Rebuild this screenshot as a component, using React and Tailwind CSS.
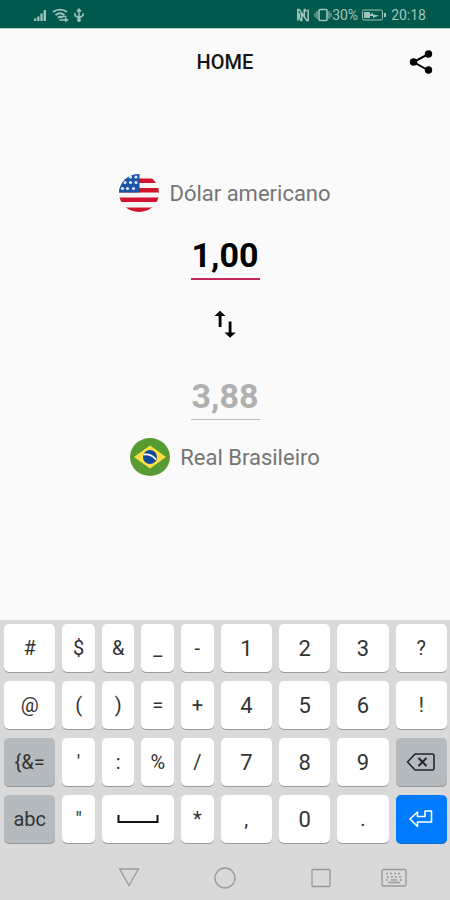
const KEYS = [
  "#", "$", "&", "_", "-", "1", "2", "3", "?",
  "@", "(", ")", "=", "+", "4", "5", "6", "!",
  "{&=", "'", ":", "%", "/", "7", "8", "9", "backspace",
  "abc", '"', "space", "*", ",", "0", ".", "enter",
];

function StatusBar() {
  return (
    <div className="flex h-7 items-center justify-between bg-[#00594c] pt-0.5 pr-6 pl-8 text-[#a0c4bd]">
      <div className="flex items-center gap-1">
        <svg width="16" height="14" viewBox="0 0 16 14" fill="currentColor" aria-hidden="true">
          <path d="M2 10.500h2.300V13H2zM5.200 8.500h2.300V13H5.200zM8.400 5.500h2.300V13H8.400zM11.600 2h2.400v11h-2.400z" />
        </svg>
        <svg width="18" height="14" viewBox="0 0 18 14" fill="none" stroke="currentColor" strokeWidth="1.800" aria-hidden="true">
          <path d="M1 4c4-3.300 10-3.300 14 0M3.500 7c3-2.400 6-2.400 9 0M6 9.700c1.500-1.200 3-1.200 4.500 0" />
          <path d="M7.500 12H15M9.500 8.500h5M13 10l2.500 2-2.500 1.500" strokeWidth="1.400" />
        </svg>
        <svg width="10" height="14" viewBox="0 0 10 14" fill="none" stroke="currentColor" strokeWidth="1.500" aria-hidden="true">
          <path d="M5 2v10M1 5v2.500L5 10l4-2.500V5M3 3.500 5 1.200l2 2.300" />
          <circle cx="5" cy="12" r="1.200" fill="currentColor" />
        </svg>
      </div>
      <div className="flex items-center text-sm">
        <svg width="14" height="14" viewBox="0 0 14 14" fill="none" stroke="currentColor" strokeWidth="1.600" aria-hidden="true">
          <path d="M1.800 12.500v-11h1.400l2.500 3.500v7.500H5L3.500 10.500M12.200 1.500v11h-1.400L8.300 9V1.500H9l1.500 2M3.500 5v6M5.700 5l2.600 4" />
        </svg>
        <svg className="ml-1" width="18" height="14" viewBox="0 0 18 14" fill="none" stroke="currentColor" strokeWidth="1.600" aria-hidden="true">
          <rect x="5" y="1.500" width="8" height="11" rx="1" />
          <path d="M3 3v8M1 5v4M15 3v8M17 5v4" strokeWidth="1" />
        </svg>
        <span>30%</span>
        <svg className="mx-1" width="25" height="12" viewBox="0 0 25 12" fill="none" stroke="currentColor" aria-hidden="true">
          <rect x=".5" y="1" width="20" height="10" rx="1.500" />
          <path d="M2 3h6v6H2z" fill="currentColor" stroke="none" />
          <path d="M23 4v4" strokeWidth="2" />
          <path d="m6 7 5-3.500v2l6 1-6 2.500V7z" fill="currentColor" stroke="none" />
        </svg>
        <span>20:18</span>
      </div>
    </div>
  );
}

function UsaFlag() {
  return (
    <svg width="40" height="38" viewBox="0 0 40 38" aria-hidden="true">
      <clipPath id="usa"><ellipse cx="20" cy="19" rx="20" ry="19" /></clipPath>
      <g clipPath="url(#usa)">
        <path d="M0 0h40v38H0z" fill="#f5f5f5" />
        <path d="M0 4.500h40v4.500H0zM0 14h40v4.500H0zM0 23.500h40V28H0zM0 33.500h40V38H0z" fill="#d3122e" />
        <path d="M0 0h20.500v18.500H0z" fill="#1b55a8" />
        <g fill="#dce9f8">
          <circle cx="11.500" cy="3" r="1.600" /><circle cx="17" cy="3" r="1.600" />
          <circle cx="6" cy="8.500" r="1.600" /><circle cx="11.500" cy="8.500" r="1.600" /><circle cx="17" cy="8.500" r="1.600" />
          <circle cx="3.500" cy="14.500" r="1.600" /><circle cx="8.500" cy="14.500" r="1.600" /><circle cx="14.500" cy="14.500" r="1.600" />
        </g>
      </g>
    </svg>
  );
}

function BrazilFlag() {
  return (
    <svg width="40" height="38" viewBox="0 0 40 38" aria-hidden="true">
      <ellipse cx="20" cy="19" rx="20" ry="19" fill="#589b32" />
      <path d="M4 19 20 7.500 36 19 20 30.500z" fill="#fddf43" />
      <circle cx="20" cy="19" r="7" fill="#0f4a9e" />
      <path d="M13.500 16.500c5-.8 9.500 1 12.500 5" fill="none" stroke="#fff" strokeWidth="1.800" />
    </svg>
  );
}

function Backspace() {
  return (
    <svg width="30" height="20" viewBox="0 0 30 20" fill="none" stroke="#20262b" strokeWidth="1.600" strokeLinejoin="round" aria-hidden="true">
      <path d="M9 2h17.500q1.500 0 1.500 1.500v13q0 1.500-1.500 1.500H9L1.500 10z" />
      <path d="m12.500 6 8 8M20.500 6l-8 8" strokeWidth="2" />
    </svg>
  );
}

function Enter() {
  return (
    <svg width="26" height="20" viewBox="0 0 26 20" fill="none" stroke="#fff" strokeWidth="1.600" strokeLinejoin="round" aria-hidden="true">
      <path d="M2 10 9.500 3v4.500h7.500V2h6.500v11h-14v4.500z" />
    </svg>
  );
}

function SpaceBar() {
  return (
    <svg width="42" height="10" viewBox="0 0 42 10" fill="none" stroke="#111" strokeWidth="2" aria-hidden="true">
      <path d="M1.500 1v7h39V1" />
    </svg>
  );
}

const ICONS = { backspace: Backspace, enter: Enter, space: SpaceBar };

const LOOKS = {
  "{&=": "bg-[#b5babf] text-xl shadow-[0_1px_0_#929699]",
  abc: "bg-[#b5babf] text-xl shadow-[0_1px_0_#929699]",
  backspace: "bg-[#b5babf] shadow-[0_1px_0_#929699]",
  enter: "bg-[#007aff] shadow-[0_1px_0_#0869c8]",
  space: "col-span-2 bg-white shadow-[0_1px_0_#999]",
};

function Key({ name }) {
  const Icon = ICONS[name];
  const digit = /^[0-9]$/.test(name);
  const look = LOOKS[name] || (digit ? "bg-white text-[22px] shadow-[0_1px_0_#999]" : "bg-white text-xl shadow-[0_1px_0_#999]");
  return (
    <button
      type="button"
      aria-label={Icon ? name : undefined}
      className={"flex h-12 items-center justify-center rounded-[5px] text-[#333] " + look}
    >
      {Icon ? <Icon /> : name}
    </button>
  );
}

const NAV = [
  { label: "Back", body: <path d="M2.500 3h19L12 19.500z" /> },
  { label: "Home", body: <circle cx="12" cy="12" r="10" /> },
  { label: "Recent apps", body: <rect x="3" y="3.500" width="18" height="17" rx="1" /> },
];

function NavButton({ item }) {
  return (
    <button type="button" aria-label={item.label}>
      <svg width="24" height="24" viewBox="0 0 24 24" fill="none" stroke="#999" strokeWidth="1.300" aria-hidden="true">
        {item.body}
      </svg>
    </button>
  );
}

function Amount({ label, value, look }) {
  return (
    <input
      aria-label={label}
      defaultValue={value}
      inputMode="decimal"
      className={"block w-[69px] bg-transparent pb-0.5 text-center text-[34px] leading-[42px] font-bold outline-none " + look}
    />
  );
}

export default function App() {
  return (
    <div className="flex min-h-screen flex-col bg-[#fafafa] font-[Roboto,sans-serif]">
      <StatusBar />
      <header className="grid h-[66px] grid-cols-[1fr_auto_1fr] items-center border-t border-[#b5cfca] px-4">
        <h1 className="col-start-2 text-xl font-medium text-[#151515]">HOME</h1>
        <button type="button" aria-label="Share" className="justify-self-end">
          <svg width="26" height="26" viewBox="0 0 26 26" fill="#000" aria-hidden="true">
            <path d="M20.500 5 5.500 13l15 8.500" fill="none" stroke="#000" strokeWidth="2" />
            <circle cx="20.500" cy="5" r="3.700" />
            <circle cx="5.500" cy="13" r="3.700" />
            <circle cx="20.500" cy="21" r="3.700" />
          </svg>
        </button>
      </header>

      <main className="flex flex-1 flex-col items-center pt-20">
        <div className="flex items-center gap-[10px] text-[22px] text-[#757575]">
          <UsaFlag />
          <span>Dólar americano</span>
        </div>
        <div className="mt-[22px]">
          <Amount label="Dólar americano" value="1,00" look="border-b-2 border-[#c2265b] text-black" />
        </div>
        <button type="button" aria-label="Inverter moedas" className="mt-[30px]">
          <svg width="24" height="28" viewBox="0 0 24 28" fill="#000" aria-hidden="true">
            <path d="M5.700 17V6H1.500L7 .8 12.500 6H8.500v11zM15.700 11.500h2.800v11h4.200L17.100 27.700 11.500 22.500h4.200z" />
          </svg>
        </button>
        <div className="mt-[37px]">
          <Amount label="Real Brasileiro" value="3,88" look="border-b border-[#bdbdbd] text-[#b0b0b0]" />
        </div>
        <div className="mt-[18px] flex items-center gap-[10px] text-[22px] text-[#757575]">
          <BrazilFlag />
          <span>Real Brasileiro</span>
        </div>
      </main>

      <div className="bg-[#d9d9d9] pt-1">
        <div className="grid grid-cols-[52fr_33fr_33fr_33fr_33fr_52fr_52fr_52fr_52fr] gap-x-[7px] gap-y-[9px] pr-[3px] pl-1">
          {KEYS.map((name) => (
            <Key key={name} name={name} />
          ))}
        </div>
        <nav className="grid h-[57px] grid-cols-[1fr_auto_1fr] items-center pt-3">
          <span className="flex justify-end pr-[72px]">
            <NavButton item={NAV[0]} />
          </span>
          <NavButton item={NAV[1]} />
          <span className="flex items-center gap-12 pl-[72px]">
            <NavButton item={NAV[2]} />
            <button type="button" aria-label="Switch keyboard">
              <svg width="26" height="20" viewBox="0 0 26 20" fill="none" stroke="#999" strokeWidth="1.300" aria-hidden="true">
                <rect x="1" y="1.500" width="24" height="16.500" rx="1.500" />
                <path d="M5 5.500h16M6 9h14" strokeDasharray="2 2" />
                <path d="M5 12h2M10 12h6M19 12h2M7 14.500h12" />
              </svg>
            </button>
          </span>
        </nav>
      </div>
    </div>
  );
}
